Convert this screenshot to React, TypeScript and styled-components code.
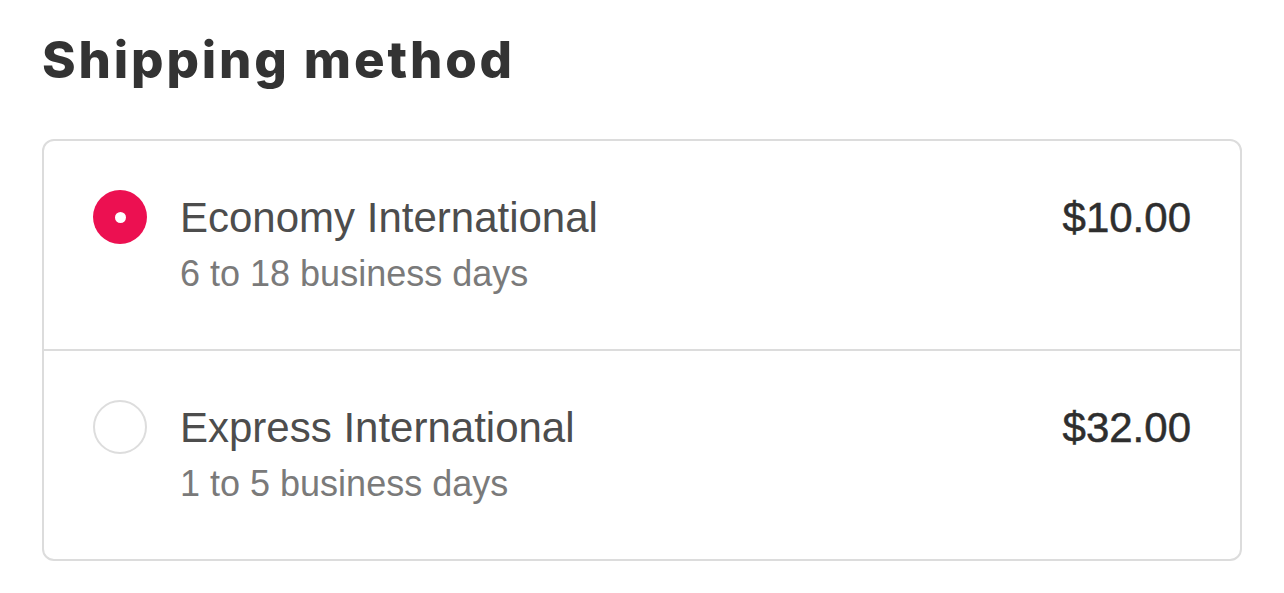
import React from "react";
import styled, { createGlobalStyle } from "styled-components";

const Global = createGlobalStyle`
  html, body { margin: 0; padding: 0; background: #ffffff; }
  body { font-family: "Liberation Sans", Arial, sans-serif; }
`;

const Page = styled.div`
  padding: 29px 42px 0 42px;
  width: 1284px;
  box-sizing: border-box;
`;

const Title = styled.h2`
  margin: 0;
  font-family: Inter, Lato, "Liberation Sans", sans-serif;
  font-weight: 800;
  font-size: 51px;
  line-height: 61px;
  color: #333333;
  letter-spacing: 2.85px;
`;

const Card = styled.div`
  margin-top: 49px;
  width: 1200px;
  box-sizing: border-box;
  border: 2px solid #dcdcdc;
  border-radius: 12px;
  display: flex;
  flex-direction: column;
`;

const Option = styled.label<{ $last?: boolean }>`
  display: grid;
  grid-template-columns: 54px 1fr auto;
  column-gap: 33px;
  align-items: start;
  padding: 48px 49px 53px 49px;
  border-bottom: ${(p) => (p.$last ? "none" : "2px solid #dcdcdc")};
  cursor: pointer;
`;

const Radio = styled.span<{ $checked?: boolean }>`
  width: 54px;
  height: 54px;
  border-radius: 50%;
  box-sizing: border-box;
  display: flex;
  align-items: center;
  justify-content: center;
  margin-top: 1px;
  background: ${(p) => (p.$checked ? "#ec1051" : "#ffffff")};
  border: ${(p) => (p.$checked ? "none" : "2.5px solid #dddddd")};
`;

const Dot = styled.span`
  width: 11px;
  height: 11px;
  border-radius: 50%;
  background: #ffffff;
`;

const Info = styled.div`
  display: flex;
  flex-direction: column;
`;

const Name = styled.div`
  font-size: 42px;
  line-height: 58px;
  color: #4d4d4d;
`;

const Duration = styled.div`
  margin-top: 5px;
  font-size: 36px;
  line-height: 44px;
  color: #7a7a7a;
`;

const Price = styled.div`
  font-size: 42px;
  line-height: 58px;
  color: #2e2e2e;
  -webkit-text-stroke: 0.5px #2e2e2e;
`;

const options = [
  { name: "Economy International", days: "6 to 18 business days", price: "$10.00", checked: true },
  { name: "Express International", days: "1 to 5 business days", price: "$32.00", checked: false },
];

export default function App() {
  return (
    <>
      <Global />
      <Page>
        <Title>Shipping method</Title>
        <Card>
          {options.map((o, i) => (
            <Option key={o.name} $last={i === options.length - 1}>
              <Radio $checked={o.checked}>{o.checked && <Dot />}</Radio>
              <Info>
                <Name>{o.name}</Name>
                <Duration>{o.days}</Duration>
              </Info>
              <Price>{o.price}</Price>
            </Option>
          ))}
        </Card>
      </Page>
    </>
  );
}
